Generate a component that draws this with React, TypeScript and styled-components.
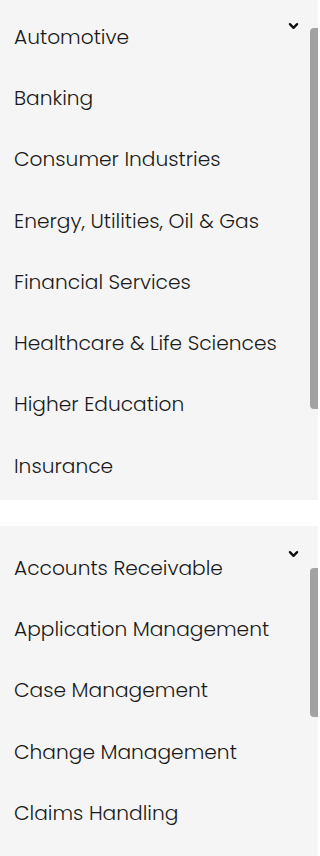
import styled, { createGlobalStyle } from "styled-components";

const industries = [
  "Automotive",
  "Banking",
  "Consumer Industries",
  "Energy, Utilities, Oil & Gas",
  "Financial Services",
  "Healthcare & Life Sciences",
  "Higher Education",
  "Insurance",
];

const useCases = [
  "Accounts Receivable",
  "Application Management",
  "Case Management",
  "Change Management",
  "Claims Handling",
];

type PanelProps = {
  items: string[];
  height: number;
  padTop: number;
  chevronTop: number;
  thumbTop: number;
  thumbHeight: number;
};

const FilterPanel = ({ items, height, padTop, chevronTop, thumbTop, thumbHeight }: PanelProps) => {
  return (
    <Panel $height={height}>
      <List $padTop={padTop}>
        {items.map((item) => (
          <Item key={item}>{item}</Item>
        ))}
      </List>
      <Chevron $top={chevronTop} viewBox="0 0 10 6" aria-hidden>
        <polyline points="1,1 5,5 9,1" />
      </Chevron>
      <Thumb $top={thumbTop} $height={thumbHeight} />
    </Panel>
  );
};

const App = () => {
  return (
    <>
      <GlobalStyle />
      <Page>
        <FilterPanel
          items={industries}
          height={500}
          padTop={6}
          chevronTop={23}
          thumbTop={28}
          thumbHeight={381}
        />
        <FilterPanel
          items={useCases}
          height={330}
          padTop={11}
          chevronTop={25}
          thumbTop={42}
          thumbHeight={149}
        />
      </Page>
    </>
  );
};

const GlobalStyle = createGlobalStyle`
  html, body {
    margin: 0;
    padding: 0;
    background: #ffffff;
  }
  body {
    font-family: "Poppins", "Open Sans", "Noto Sans", sans-serif;
    overflow: hidden;
  }
`;

const Page = styled.div`
  display: flex;
  flex-direction: column;
  gap: 26px;
  width: 318px;
`;

const Panel = styled.section<{ $height: number }>`
  position: relative;
  height: ${({ $height }) => $height}px;
  background: #f5f5f5;
  overflow: hidden;
`;

const List = styled.ul<{ $padTop: number }>`
  margin: 0;
  padding: ${({ $padTop }) => $padTop}px 0 0 14px;
  list-style: none;
`;

const Item = styled.li`
  display: flex;
  align-items: center;
  height: 61.3px;
  font-size: 20.2px;
  font-weight: 300;
  color: #1a1a1a;
  white-space: nowrap;
`;

const Chevron = styled.svg<{ $top: number }>`
  position: absolute;
  top: ${({ $top }) => $top}px;
  left: 289px;
  width: 9px;
  height: 6px;
  fill: none;
  stroke: #111111;
  stroke-width: 2.6;
  stroke-linecap: round;
  stroke-linejoin: round;
  overflow: visible;
`;

const Thumb = styled.div<{ $top: number; $height: number }>`
  position: absolute;
  top: ${({ $top }) => $top}px;
  right: 0;
  width: 8px;
  height: ${({ $height }) => $height}px;
  background: #a2a2a2;
  border-radius: 4px 0 0 4px;
`;

export default App;
